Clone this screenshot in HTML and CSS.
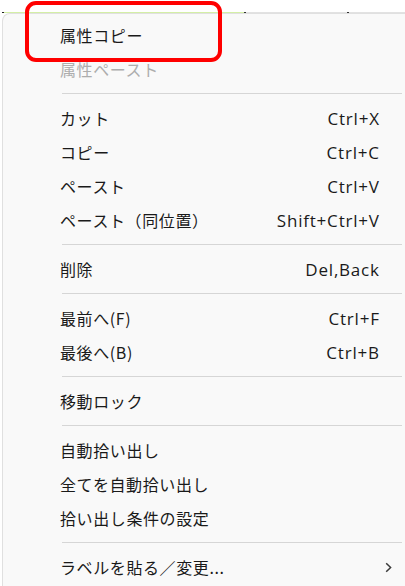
FILE: index.html
```html
<!DOCTYPE html>
<html lang="ja">
<head>
<meta charset="utf-8">
<link rel="stylesheet" href="styles.css">
</head>
<body>
<div class="backdrop">
  <div class="strip"><span class="tick"></span><span class="green"></span><span class="dot"></span><span class="gray"></span><span class="dot"></span><span class="gray grow"></span></div>
</div>
<div class="menu">
  <div class="item"><span class="label">属性コピー</span><span class="key"></span><span class="sub"></span></div>
  <div class="item disabled"><span class="label">属性ペースト</span><span class="key"></span><span class="sub"></span></div>
  <div class="sep"></div>
  <div class="item"><span class="label">カット</span><span class="key">Ctrl+X</span><span class="sub"></span></div>
  <div class="item"><span class="label">コピー</span><span class="key">Ctrl+C</span><span class="sub"></span></div>
  <div class="item"><span class="label">ペースト</span><span class="key">Ctrl+V</span><span class="sub"></span></div>
  <div class="item"><span class="label">ペースト（同位置）</span><span class="key">Shift+Ctrl+V</span><span class="sub"></span></div>
  <div class="sep"></div>
  <div class="item"><span class="label">削除</span><span class="key">Del,Back</span><span class="sub"></span></div>
  <div class="sep"></div>
  <div class="item"><span class="label">最前へ(F)</span><span class="key">Ctrl+F</span><span class="sub"></span></div>
  <div class="item"><span class="label">最後へ(B)</span><span class="key">Ctrl+B</span><span class="sub"></span></div>
  <div class="sep"></div>
  <div class="item"><span class="label">移動ロック</span><span class="key"></span><span class="sub"></span></div>
  <div class="sep"></div>
  <div class="item"><span class="label">自動拾い出し</span><span class="key"></span><span class="sub"></span></div>
  <div class="item"><span class="label">全てを自動拾い出し</span><span class="key"></span><span class="sub"></span></div>
  <div class="item"><span class="label">拾い出し条件の設定</span><span class="key"></span><span class="sub"></span></div>
  <div class="sep"></div>
  <div class="item"><span class="label">ラベルを貼る／変更...</span><span class="key"></span><span class="sub"><svg width="7" height="11" viewBox="0 0 7 11"><path d="M1.2 1.2 L5.6 5.5 L1.2 9.8" fill="none" stroke="#3a3a3a" stroke-width="1.5"/></svg></span></div>
</div>
<div class="highlight"></div>
</body>
</html>
```

FILE: styles.css
```css
html, body {
  margin: 0;
  padding: 0;
  background: #ffffff;
  width: 405px;
  height: 586px;
  overflow: hidden;
}
body {
  position: relative;
  font-family: "Noto Sans CJK JP", "Noto Sans", sans-serif;
}
.backdrop {
  height: 13px;
  display: flex;
  flex-direction: column;
  justify-content: flex-end;
}
.strip {
  display: flex;
  height: 1px;
  position: relative;
}
.strip .green {
  width: 240px;
  background: #d4efa6;
}
.strip .gray {
  width: 101px;
  background: #e2e2e2;
}
.strip .grow {
  flex: 1;
}
.strip .dot {
  width: 2px;
  background: #333;
}
.strip .tick {
  width: 2px;
  background: #222;
  margin-left: 2px;
}
.menu {
  margin-left: 2px;
  width: 404px;
  box-sizing: border-box;
  border: 1px solid #e0e0e0;
  border-right: none;
  border-bottom: none;
  border-radius: 8px 0 0 0;
  background: #f9f9f9;
  padding: 4px 0 0 0;
  height: 580px;
}
.item {
  display: grid;
  grid-template-columns: 1fr auto 27px;
  align-items: center;
  height: 34px;
  padding-left: 57px;
  color: #1a1a1a;
  font-size: 16px;
}
.item.disabled {
  color: #adadad;
}
.label {
  white-space: nowrap;
  letter-spacing: 0.6px;
}
.key {
  font-family: "Open Sans", "Noto Sans", sans-serif;
  font-size: 17px;
  letter-spacing: 0.8px;
  margin-right: -0.8px;
  white-space: nowrap;
}
.sub {
  display: flex;
  align-items: center;
  padding-left: 6px;
}
.sep {
  height: 1px;
  background: #d6d6d6;
  margin: 7px 4px 7px 59px;
}
.highlight {
  position: absolute;
  left: 25px;
  top: 1px;
  width: 197px;
  height: 61px;
  box-sizing: border-box;
  border: 4px solid #ff0000;
  border-radius: 11px;
}
```
